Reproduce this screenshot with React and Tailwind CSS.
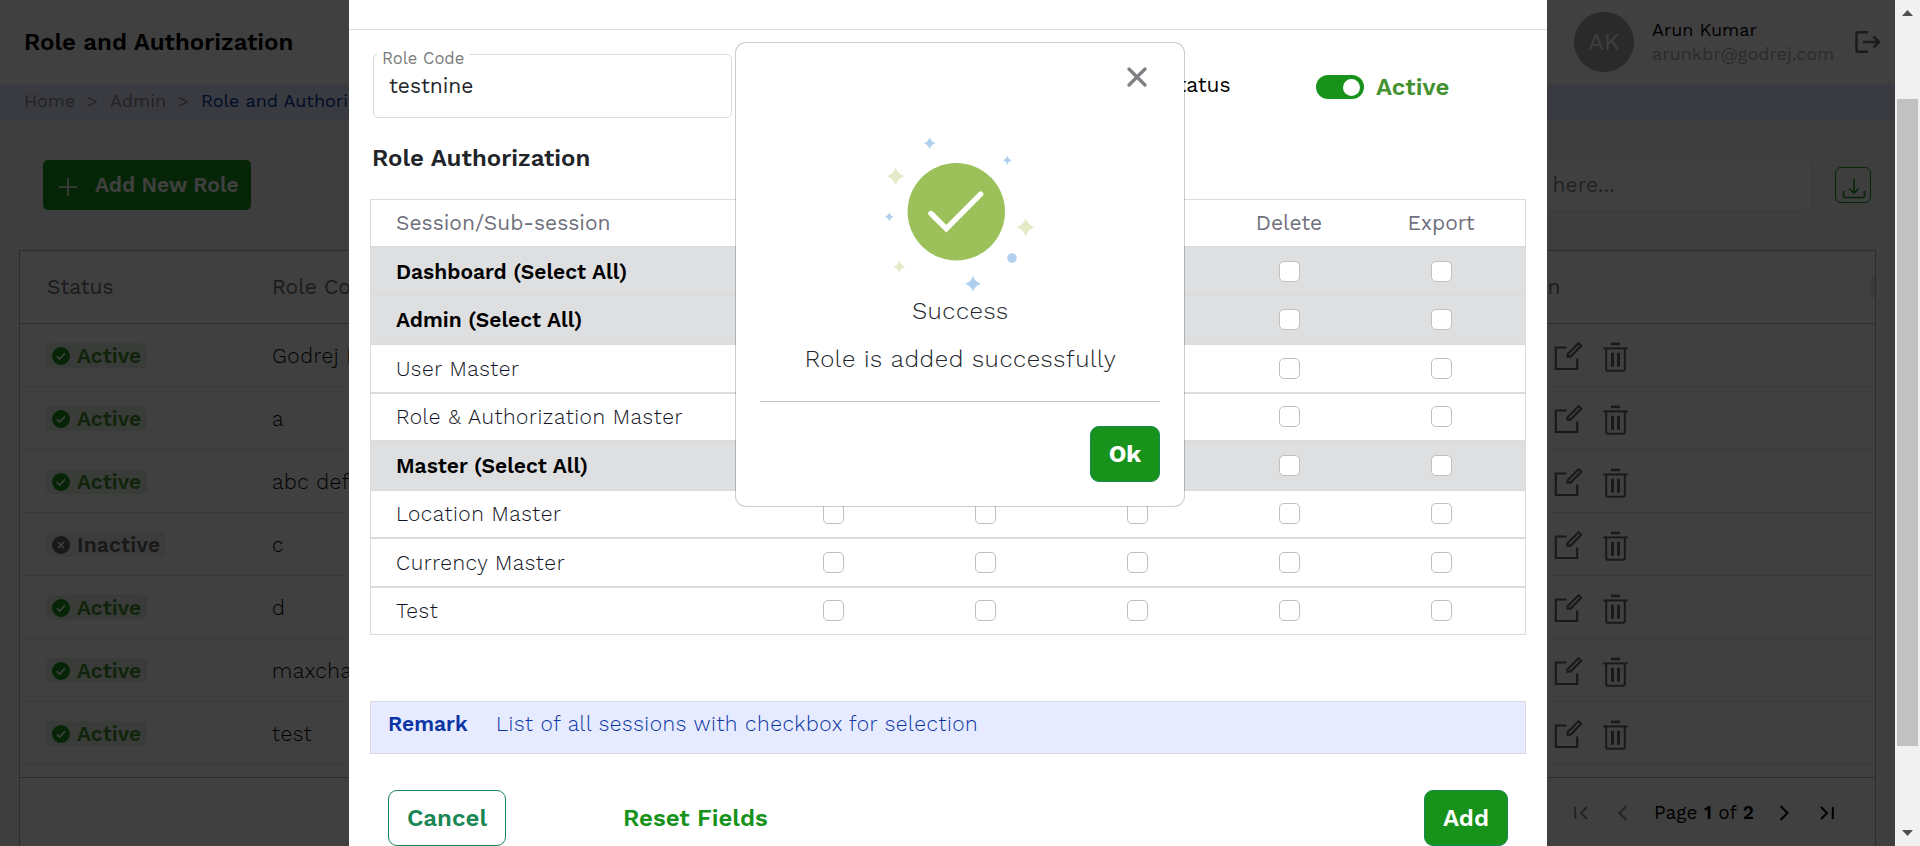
const roles = [
  { name: "Godrej India", active: true },
  { name: "a", active: true },
  { name: "abc def", active: true },
  { name: "c", active: false },
  { name: "d", active: true },
  { name: "maxchar", active: true },
  { name: "test", active: true },
];

const sessions = [
  { label: "Dashboard (Select All)", group: true, height: "h-[48px] pt-px" },
  { label: "Admin (Select All)", group: true, height: "h-[49px]" },
  { label: "User Master", group: false, height: "h-[49px]" },
  { label: "Role & Authorization Master", group: false, height: "h-[48px] pb-px" },
  { label: "Master (Select All)", group: true, height: "h-[49px]" },
  { label: "Location Master", group: false, height: "h-[48px] pb-px" },
  { label: "Currency Master", group: false, height: "h-[49px]" },
  { label: "Test", group: false, height: "h-[48px] pb-px" },
];

const columns = ["", "", "", "Delete", "Export"];

function LogoutIcon() {
  return (
    <svg width="26" height="24" viewBox="0 0 26 24" fill="none" stroke="#6b6b6b" strokeWidth="2.5">
      <path d="M13 2.2H3.5Q1.5 2.2 1.5 4.2V19.8Q1.5 21.8 3.5 21.8H13" />
      <path d="M8 12H24M18.5 6.5L24 12L18.5 17.5" />
    </svg>
  );
}

function DownloadIcon() {
  return (
    <svg width="24" height="21" viewBox="0 0 24 21" fill="none" stroke="#17921b" strokeWidth="1.6">
      <path d="M1.5 13V17.5Q1.5 19.5 3.5 19.5H20.5Q22.5 19.5 22.5 17.5V13" />
      <path d="M12 1V15M7.3 10.5L12 15.2L16.7 10.5" />
    </svg>
  );
}

function EditIcon() {
  return (
    <svg width="29" height="30" viewBox="0 0 29 30" fill="none" stroke="#63646a" strokeWidth="2.2">
      <path d="M12.5 6.5H1.8V28H23.2V17.5" />
      <path d="M13.5 13.3L24.6 2.2L27.2 4.8L16.6 15.6H13.5Z" />
    </svg>
  );
}

function TrashIcon() {
  return (
    <svg width="25" height="30" viewBox="0 0 25 30" fill="none" stroke="#63646a" strokeWidth="2" className="mt-px">
      <path d="M8 1.9H17" strokeWidth="2.6" />
      <path d="M0.3 6.4H24.7" strokeWidth="2" />
      <path d="M3.2 6.4V27.6Q3.2 28.7 4.3 28.7H20.7Q21.8 28.7 21.8 27.6V6.4" />
      <path d="M9.5 10.8V24.8M15.5 10.8V24.8" strokeWidth="3" />
    </svg>
  );
}

function StatusPill({ active }) {
  return (
    <span
      className={
        active
          ? "flex h-[25px] w-[101px] items-center rounded-[5px] bg-[#e2f0e4] pl-1.5 text-[#43912f]"
          : "flex h-[25px] w-[119px] items-center rounded-[5px] bg-[#ededed] pl-1.5 text-[#63646a]"
      }
    >
      <svg width="18" height="18" viewBox="0 0 18 18" fill="none" stroke="#fff" strokeWidth="1.6">
        <circle cx="9" cy="9" r="9" stroke="none" fill={active ? "#17921b" : "#63646a"} />
        {active ? <path d="M4.8 9.2L7.6 12L13 6.4" /> : <path d="M6 6L12 12M12 6L6 12" />}
      </svg>
      <span className={active ? "ml-[7px] text-[21px] font-semibold" : "ml-[7px] text-[21px] font-semibold tracking-[0.2px]"}>
        {active ? "Active" : "Inactive"}
      </span>
    </span>
  );
}

function Page() {
  return (
    <div className="flex h-full w-[1895px] flex-col bg-[#f5f5f5]">
      <header className="flex h-[84px] shrink-0 items-center bg-white pl-6">
        <h1 className="text-2xl font-semibold text-black">Role and Authorization</h1>
        <div className="ml-auto flex h-[60px] w-[60px] items-center justify-center rounded-full bg-[#a8a8a8] text-2xl text-[#f5f5f5]">
          AK
        </div>
        <div className="ml-[18px] w-[203px] text-[18px] leading-6">
          <div className="text-black">Arun Kumar</div>
          <div className="text-[#acacac]">arunkbr@godrej.com</div>
        </div>
        <div className="mr-[14px]">
          <LogoutIcon />
        </div>
      </header>

      <nav className="flex h-9 shrink-0 items-center bg-[#e6ebff] pb-[3px] pl-6 text-[18px] text-[#8a8a8a]">
        <span className="w-[63px]">Home</span>
        <span className="w-[23px]">&gt;</span>
        <span className="w-[68px]">Admin</span>
        <span className="w-[23px]">&gt;</span>
        <span className="text-[#0033a0]">Role and Authorization</span>
      </nav>

      <div className="flex h-[130px] shrink-0 items-center pl-[43px] pr-6">
        <button className="flex h-[50px] w-[208px] items-center rounded-[5px] bg-[#17921b] pl-4 text-white">
          <svg width="18" height="18" viewBox="0 0 18 18" stroke="#fff" strokeWidth="1.6" className="mt-1">
            <path d="M9 0V18M0 9H18" />
          </svg>
          <span className="ml-[18px] text-[21px] font-semibold">Add New Role</span>
        </button>
        <div className="ml-auto flex h-[54px] w-[450px] items-center rounded-[6px] border border-[#ebebeb] bg-white pl-[112px] text-[21px] text-[#8a8a8a]">
          Search here...
        </div>
        <div className="ml-[23px] flex h-9 w-9 items-center justify-center rounded-[6px] border border-[#17921b] pl-px pt-[6px]">
          <DownloadIcon />
        </div>
      </div>

      <section className="ml-[19px] flex w-[1857px] grow flex-col border border-b-0 border-[#b4b4b4] bg-white text-[21px]">
        <div className="flex h-[73px] shrink-0 items-center border-b border-[#b4b4b4] pl-[27px] text-[#6c6d78]">
          <span className="w-[225px]">Status</span>
          <span>Role Code</span>
          <span className="ml-auto w-[376px]">Action</span>
          <span className="h-[22px] w-1 bg-[#e6e8f0]" />
        </div>
        {roles.map((role) => (
          <div key={role.name} className="flex h-[63px] shrink-0 items-center border-b border-[#e6e6e6] pl-[26px] pt-px">
            <div className="w-[226px]">
              <StatusPill active={role.active} />
            </div>
            <span className="font-light tracking-[0.55px] text-black">{role.name}</span>
            <div className="ml-auto flex w-[321px] gap-[20px] pt-px">
              <EditIcon />
              <TrashIcon />
            </div>
          </div>
        ))}
        <div className="h-[13px] shrink-0 border-b border-[#b4b4b4]" />
        <div className="flex grow items-center justify-end pr-[41px] pt-[2px] text-black">
          <svg width="14" height="14" viewBox="0 0 14 14" fill="none" stroke="#8a8a8a" strokeWidth="2">
            <path d="M1.2 1V13M13 1L7 7L13 13" />
          </svg>
          <svg width="10" height="16" viewBox="0 0 10 16" fill="none" stroke="#8a8a8a" strokeWidth="2" className="ml-[30px]">
            <path d="M8.5 1L1.5 8L8.5 15" />
          </svg>
          <span className="ml-[26px] w-[125px] pt-px text-[19px]">
            Page <b className="font-semibold">1</b> of <b className="font-semibold">2</b>
          </span>
          <svg width="10" height="16" viewBox="0 0 10 16" fill="none" stroke="#000" strokeWidth="2">
            <path d="M1.5 1L8.5 8L1.5 15" />
          </svg>
          <svg width="14" height="14" viewBox="0 0 14 14" fill="none" stroke="#000" strokeWidth="2" className="ml-[31px]">
            <path d="M1 1L7 7L1 13M12.8 1V13" />
          </svg>
        </div>
      </section>
    </div>
  );
}

function SessionTable() {
  return (
    <div className="ml-[21px] w-[1156px] border-x border-t border-[#dcdcdc] text-[21px]">
      <div className="flex h-[47px] items-center border-b border-[#dcdcdc] pb-px pl-[25px] pr-2 text-[#6f707c]">
        <span className="mr-auto">Session/Sub-session</span>
        {columns.map((title, i) => (
          <span key={i} className="w-[152px] text-center">{title}</span>
        ))}
      </div>
      {sessions.map((s) => (
        <div
          key={s.label}
          className={`${s.height} flex items-center border-y border-[#dcdcdc] pl-[25px] pr-2 ${
            s.group ? "bg-[#dedfe1] font-semibold text-black" : "font-light tracking-[0.58px] text-[#101223]"
          }`}
        >
          <span className="mr-auto">{s.label}</span>
          {columns.map((_, i) => (
            <span key={i} className="flex w-[152px] justify-center">
              <span className="h-[21px] w-[21px] rounded-[5px] border border-[#bfbfbf] bg-white" />
            </span>
          ))}
        </div>
      ))}
    </div>
  );
}

function RoleModal() {
  return (
    <div className="absolute left-[349px] top-0 flex h-[846px] w-[1198px] flex-col bg-white">
      <div className="h-[30px] shrink-0 border-b border-[#dedede]" />
      <div className="flex h-[88px] shrink-0 pl-6 pt-6">
        <div className="relative h-16 w-[359px] rounded-[5px] border border-[#dcdcdc] pl-[15px] pt-[15px]">
          <span className="absolute -top-[10px] left-[3px] bg-white px-[5px] text-[16.6px] leading-7 text-[#7b7b7b]">
            Role Code
          </span>
          <span className="block text-[21px] leading-8 text-[#212529]">testnine</span>
        </div>
        <span className="ml-[432px] mt-[15px] w-[152px] text-[21px] leading-8 text-black">Status</span>
        <span className="mt-[21px] flex h-6 w-12 justify-end rounded-full bg-[#17921b] py-[3.5px] pr-1">
          <span className="h-[17px] w-[17px] rounded-full bg-white" />
        </span>
        <span className="ml-3 mt-[17px] text-2xl font-semibold leading-8 text-[#43912f]">Active</span>
      </div>
      <h2 className="flex h-[81px] shrink-0 items-center pb-px pl-[23px] text-2xl font-semibold text-[#212529]">
        Role Authorization
      </h2>
      <SessionTable />
      <div className="ml-[21px] mt-[66px] flex h-[53px] w-[1156px] shrink-0 border border-[#d9dbe3] bg-[#e6ebff] pl-[17px] pt-[6px] text-[21px] leading-8 text-[#0b35a5]">
        <span className="w-[108px] font-semibold">Remark</span>
        <span className="font-light tracking-[0.55px]">List of all sessions with checkbox for selection</span>
      </div>
      <div className="mt-9 flex h-14 shrink-0 items-center pl-[39px] pr-[39px] text-2xl font-semibold">
        <button className="h-14 w-[118px] rounded-[9px] border border-[#198754] text-[#198754]">Cancel</button>
        <span className="ml-[117px] text-[#17921b]">Reset Fields</span>
        <button className="ml-auto h-14 w-[84px] rounded-[9px] border border-[#198754] bg-[#17921b] text-white">Add</button>
      </div>
    </div>
  );
}

const sparkles = [
  { x: 56.7, y: 6.3, r: 6, fill: "#aecfee" },
  { x: 134.3, y: 23.3, r: 4.5, fill: "#aecfee" },
  { x: 22.7, y: 39.3, r: 9.3, fill: "#e3eac8" },
  { x: 16.3, y: 79.7, r: 4.5, fill: "#aecfee" },
  { x: 152.7, y: 90.3, r: 9.3, fill: "#e3eac8" },
  { x: 26.3, y: 129.7, r: 6.3, fill: "#e3eac8" },
  { x: 100, y: 146.7, r: 8, fill: "#aecfee" },
];

function SuccessArt() {
  return (
    <svg width="170" height="156" viewBox="0 0 170 156" className="mr-[4px] mt-[50px]">
      {sparkles.map((s, i) => (
        <path
          key={i}
          fill={s.fill}
          transform={`translate(${s.x} ${s.y}) scale(${s.r})`}
          d="M0-1Q.22-.22 1 0Q.22.22 0 1Q-.22.22-1 0Q-.22-.22 0-1Z"
        />
      ))}
      <circle cx="139" cy="121" r="4.8" fill="#b1d0ee" />
      <circle cx="83.3" cy="74.7" r="48.7" fill="#9cc15a" />
      <path d="M58 76.5L73.3 91.6L107.7 57.1" fill="none" stroke="#fff" strokeWidth="5.4" strokeLinecap="round" />
    </svg>
  );
}

function SuccessDialog() {
  return (
    <div className="absolute left-[735px] top-[42px] flex h-[465px] w-[450px] flex-col items-center rounded-[11px] border border-black/20 bg-white bg-clip-padding px-6 pt-[24px] text-[#212529]">
      <svg width="20" height="20" viewBox="0 0 20 20" stroke="#7f8083" strokeWidth="3.2" strokeLinecap="round" className="mr-[13px] self-end">
        <path d="M2 2L18 18M18 2L2 18" />
      </svg>
      <SuccessArt />
      <p className="mt-[2px] pl-px text-2xl font-light leading-8 tracking-[0.55px]">Success</p>
      <p className="mt-4 pl-px text-2xl font-light leading-8 tracking-[0.58px]">Role is added successfully</p>
      <div className="mt-[26px] h-px w-full bg-[#c4c4c4]" />
      <button className="mt-6 h-14 w-[70px] self-end rounded-[9px] border border-[#198754] bg-[#17921b] text-2xl font-bold text-white">
        Ok
      </button>
    </div>
  );
}

function Scrollbar() {
  return (
    <div className="flex h-full w-[25px] flex-col items-center bg-[#f1f1f1]">
      <svg width="11" height="6" viewBox="0 0 11 6" className="mt-[10px]">
        <path d="M5.5 0L11 6H0Z" fill="#505050" />
      </svg>
      <div className="mt-[83px] h-[647px] w-[21px] bg-[#c1c1c1]" />
      <svg width="11" height="6" viewBox="0 0 11 6" className="mt-auto mb-[10px]">
        <path d="M0 0H11L5.5 6Z" fill="#505050" />
      </svg>
    </div>
  );
}

export default function App() {
  return (
    <div className="relative flex h-[846px] w-[1920px] overflow-hidden font-['Work_Sans','Inter',sans-serif]">
      <Page />
      <Scrollbar />
      <div className="absolute left-0 top-0 h-[846px] w-[1895px] bg-black/75" />
      <RoleModal />
      <SuccessDialog />
    </div>
  );
}
